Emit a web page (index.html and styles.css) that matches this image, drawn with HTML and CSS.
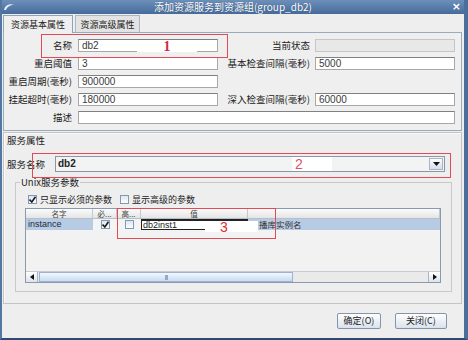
FILE: index.html
```html
<!DOCTYPE html>
<html lang="zh">
<head>
  <meta charset="UTF-8">
  <meta name="viewport" content="width=device-width, initial-scale=1.0">
  <title>添加资源服务到资源组</title>
  <link rel="stylesheet" href="styles.css">
</head>
<body>
  <div class="win">
    <div class="titlebar">
      <svg class="logo" width="12" height="8" viewBox="0 0 12 8"><path d="M1 7 C2 2 7 0 11 2 C7 2 4 4 3 7 Z" fill="#e4edf8"/></svg>
      <span class="title">添加资源服务到资源组(group_db2)</span>
      <span class="close">×</span>
    </div>

    <div class="tabs">
      <div class="tab active">资源基本属性</div>
      <div class="tab">资源高级属性</div>
    </div>

    <div class="panel">
      <span class="lbl">名称</span><div class="field">db2</div>
      <span class="lbl r">当前状态</span><div class="field off"></div>

      <span class="lbl">重启阈值</span><div class="field">3</div>
      <span class="lbl r">基本检查间隔(毫秒)</span><div class="field">5000</div>

      <span class="lbl">重启周期(毫秒)</span><div class="field">900000</div>
      <span></span><span></span>

      <span class="lbl">挂起超时(毫秒)</span><div class="field">180000</div>
      <span class="lbl r">深入检查间隔(毫秒)</span><div class="field">60000</div>

      <span class="lbl">描述</span><div class="field wide"></div>
    </div>

    <div class="svc">
      <div class="svc-title">服务属性</div>
      <div class="svc-row">
        <span class="svc-lbl">服务名称</span>
        <div class="combo">
          <span class="combo-val">db2</span>
          <span class="combo-btn"><svg width="7" height="4" viewBox="0 0 7 4"><path d="M0 0 H7 L3.5 4 Z" fill="#111"/></svg></span>
        </div>
      </div>

      <fieldset class="unix">
        <legend>Unix服务参数</legend>
        <div class="checks">
          <span class="cb"><svg width="7" height="7" viewBox="0 0 7 7"><path d="M0.5 3.5 L2.8 6 L6.5 0.8" fill="none" stroke="#1a1a1a" stroke-width="1.6"/></svg></span>
          <span class="cb-text">只显示必须的参数</span>
          <span class="cb"></span>
          <span class="cb-text">显示高级的参数</span>
        </div>

        <div class="table">
          <div class="thead">
            <span>名字</span><span>必...</span><span>高...</span><span>值</span><span></span>
          </div>
          <div class="trow">
            <span class="sel name">instance</span>
            <span class="chk"><span class="cb"><svg width="7" height="7" viewBox="0 0 7 7"><path d="M0.5 3.5 L2.8 6 L6.5 0.8" fill="none" stroke="#1a1a1a" stroke-width="1.6"/></svg></span></span>
            <span class="chk"><span class="cb"></span></span>
            <span class="edit">db2inst1</span>
            <span class="sel desc">播库实例名</span>
          </div>
          <div class="tbody"></div>
          <div class="hscroll">
            <span class="arrow"><svg width="4" height="6" viewBox="0 0 4 6"><path d="M4 0 V6 L0 3 Z" fill="#111"/></svg></span>
            <span class="track">
              <span class="thumb"><i class="grip"></i></span>
            </span>
            <span class="arrow right"><svg width="4" height="6" viewBox="0 0 4 6"><path d="M0 0 V6 L4 3 Z" fill="#111"/></svg></span>
          </div>
        </div>
      </fieldset>
    </div>

    <div class="footer">
      <button class="btn ok">确定(O)</button>
      <button class="btn cancel">关闭(C)</button>
    </div>

    <!-- marcas rojas encima de la captura -->
    <div class="mark m1"></div>
    <span class="num n1">1</span>
    <div class="mark m2"></div>
    <span class="num n2">2</span>
    <div class="mark m3"></div>
    <span class="num n3">3</span>
  </div>
</body>
</html>
```

FILE: styles.css
```css
body {
  margin: 0;
  font-family: "Noto Sans CJK SC", sans-serif;
  font-size: 9.5px;
  color: #222;
}

.win {
  position: relative;
  width: 468px;
  height: 340px;
  box-sizing: border-box;
  border-left: 2px solid #5377a3;
  border-right: 4px solid #4b6e9a;
  border-bottom: 2px solid #2d4a70;
  background: #eeeeee;
  display: flex;
  flex-direction: column;
  overflow: hidden;
}

/* barra de titulo */
.titlebar {
  height: 14px;
  display: grid;
  grid-template-columns: 1fr auto 1fr;
  align-items: center;
  background: linear-gradient(#6d90bb, #466b99);
  color: #fff;
}

.logo {
  margin-left: 1px;
}

.title {
  font-size: 10px;
  line-height: 14px;
  text-shadow: 0 0 1px rgba(20, 40, 70, 0.6);
}

.close {
  justify-self: end;
  padding-right: 3px;
  font-family: "DejaVu Sans", sans-serif;
  font-size: 11px;
  font-weight: bold;
  line-height: 14px;
}

/* pestañas */
.tabs {
  display: flex;
  gap: 2px;
  height: 17px;
  margin: 1px 0 0 1px;
}

.tab {
  box-sizing: border-box;
  height: 17px;
  padding-top: 2px;
  text-align: center;
  font-size: 9px;
  line-height: 13px;
  border: 1px solid #aab6c6;
  border-bottom: none;
  background: #e3e3e3;
  width: 65px;
}

.tab.active {
  position: relative;
  width: 70px;
  height: 18px;
  margin-bottom: -1px;
  background: #efefef;
  border-color: #8fa3bd;
  z-index: 1;
}

.panel {
  margin: 0 2px 0 1px;
  height: 99px;
  box-sizing: border-box;
  border: 1px solid #9aaabf;
  background: #efefef;
  padding-top: 6px;
  display: grid;
  grid-template-columns: 74px 140px 97px 140px;
  grid-auto-rows: 13px;
  row-gap: 5px;
  align-content: start;
}

.lbl {
  text-align: right;
  padding-right: 6px;
  line-height: 13px;
  white-space: nowrap;
}

.lbl.r {
  padding-right: 5px;
}

.field {
  box-sizing: border-box;
  border: 1px solid #a8a8a8;
  border-top-color: #808080;
  background: #fff;
  font-family: "Liberation Sans", sans-serif;
  font-size: 10px;
  line-height: 11px;
  padding-left: 3px;
  color: #3a3a3a;
}

.field.off {
  background: #e8e8e8;
  border-color: #c6c6c6;
}

.field.wide {
  grid-column: 2 / 5;
}

/* propiedades del servicio */
.svc {
  margin: 1px 2px 0 1px;
  height: 172px;
  box-sizing: border-box;
  border: 1px solid #c4c4c4;
  box-shadow: inset 1px 1px #fafafa;
}

.svc-title {
  padding: 2px 0 0 3px;
  line-height: 11px;
}

.svc-row {
  display: flex;
  align-items: center;
  height: 16px;
  margin-top: 10px;
  padding-left: 3px;
}

.svc-lbl {
  width: 48px;
}

.combo {
  width: 390px;
  height: 16px;
  box-sizing: border-box;
  border: 1px solid #8b97a7;
  background: #f3f3f3;
  display: flex;
}

.combo-val {
  flex: 1;
  padding-left: 2px;
  font-family: "Liberation Sans", sans-serif;
  font-weight: bold;
  font-size: 10px;
  line-height: 14px;
}

.combo-btn {
  width: 12px;
  margin: 1px;
  border: 1px solid #a9b5c4;
  background: linear-gradient(#fdfdfd, #d6dee8);
  display: flex;
  align-items: center;
  justify-content: center;
}

.unix {
  margin: 5px 9px 11px 11px;
  padding: 6px 10px 8px 9px;
  border: 1px solid #c8c8c8;
  min-width: 0;
}

.unix legend {
  padding: 0 1px;
  margin-left: -5px;
  font-size: 9.5px;
  line-height: 11px;
}

.checks {
  display: flex;
  align-items: center;
  height: 10px;
  padding-left: 3px;
}

.cb {
  box-sizing: border-box;
  width: 9px;
  height: 9px;
  border: 1px solid #7f9ab8;
  background: linear-gradient(#dfe6ee, #fdfdfd);
  display: flex;
  align-items: center;
  justify-content: center;
}

.cb-text {
  margin: 0 8px 0 3px;
  font-size: 9px;
}

/* tabla de parametros */
.table {
  margin-top: 4px;
  height: 75px;
  box-sizing: border-box;
  border: 1px solid #8a9aae;
  background: #f2f2f2;
  display: flex;
  flex-direction: column;
}

.thead,
.trow {
  display: grid;
  grid-template-columns: 67px 24px 24px 107px 1fr;
}

.thead {
  height: 10px;
  box-sizing: border-box;
  border-bottom: 1px solid #b6bec8;
  background: linear-gradient(#fbfbfb, #e5e5e5);
  font-size: 7.5px;
  line-height: 9px;
  text-align: center;
  color: #444;
}

.thead span {
  border-right: 1px solid #c3c8cf;
  overflow: hidden;
}

.trow {
  height: 11px;
  font-size: 9px;
  line-height: 11px;
}

.sel {
  background: #b7cce4;
}

.name {
  padding-left: 2px;
  font-family: "Liberation Sans", sans-serif;
  color: #1d2a3a;
}

.chk {
  background: #f4f4f4;
  display: flex;
  align-items: center;
  justify-content: center;
}

.edit {
  box-sizing: border-box;
  background: #fff;
  border: 1px solid #222;
  border-top-width: 2px;
  padding-left: 1px;
  font-family: "Liberation Sans", sans-serif;
  line-height: 8px;
  color: #222;
}

.desc {
  padding-left: 11px;
  font-size: 8.5px;
  color: #333;
}

.tbody {
  flex: 1;
}

.hscroll {
  height: 11px;
  box-sizing: border-box;
  display: flex;
  border-top: 1px solid #c5cbd3;
  background: #eaeaea;
}

.arrow {
  width: 11px;
  display: flex;
  align-items: center;
  justify-content: center;
  background: linear-gradient(#ffffff, #dde3ea);
  border-right: 1px solid #aab4c2;
}

.arrow.right {
  border-right: none;
  border-left: 1px solid #aab4c2;
}

.track {
  flex: 1;
  display: flex;
  padding-left: 1px;
}

.thumb {
  width: 254px;
  box-sizing: border-box;
  border: 1px solid #9db3cf;
  background: linear-gradient(#f2f7fd, #c9dcf1);
  display: flex;
  align-items: center;
  justify-content: center;
}

.grip {
  width: 3px;
  height: 5px;
  background: #93a9c6;
}

/* botones */
.footer {
  flex: 1;
  display: flex;
  justify-content: flex-end;
  align-items: flex-start;
  gap: 14px;
  padding: 9px 17px 0 0;
}

.btn {
  height: 16px;
  padding: 0;
  border: 1px solid #8494ab;
  border-radius: 2px;
  background: linear-gradient(#ffffff, #d9e2ec);
  font-family: "Noto Sans CJK SC", sans-serif;
  font-size: 9px;
  line-height: 14px;
  color: #222;
}

.btn.ok {
  width: 44px;
}

.btn.cancel {
  width: 52px;
}

/* anotaciones rojas */
.mark {
  position: absolute;
  box-sizing: border-box;
  border: 1px solid #e24a56;
}

.m1 { left: 39px; top: 34px; width: 187px; height: 24px; }
.m2 { left: 30px; top: 153px; width: 419px; height: 25px; }
.m3 { left: 115px; top: 208px; width: 159px; height: 31px; }

.num {
  position: absolute;
  background: #fff;
  line-height: 12px;
}

.n1 {
  left: 135px; top: 41px; width: 60px; height: 11px;
  text-align: center;
  color: #d4264a;
  font: bold 14px/12px "Liberation Serif", serif;
}

.n2 {
  left: 290px; top: 157px; width: 40px; height: 14px;
  padding-left: 3px;
  box-sizing: border-box;
  color: #e2505f;
  font: 14px/14px "Liberation Sans", sans-serif;
}

.n3 {
  left: 203px; top: 221px; width: 53px; height: 11px;
  padding-left: 15px;
  box-sizing: border-box;
  color: #e52c2c;
  font: 14px/12px "Liberation Sans", sans-serif;
}
```
